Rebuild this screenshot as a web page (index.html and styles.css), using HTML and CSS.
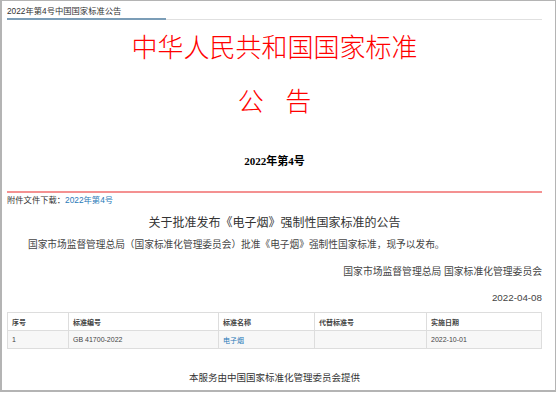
FILE: index.html
```html
<!DOCTYPE html>
<html lang="zh-CN">
  <head>
    <meta charset="UTF-8" />
    <title>2022年第4号中国国家标准公告</title>
    <link rel="stylesheet" href="styles.css">
  </head>
  <body>
    <div class="page">
      <div class="tab-bar">
        <span class="tab-title">2022年第4号中国国家标准公告</span>
      </div>

      <div class="heading">
        <h1 class="main-title">中华人民共和国国家标准</h1>
        <h2 class="notice-title">公&nbsp;&nbsp;&nbsp;告</h2>
        <p class="notice-no">2022年第4号</p>
      </div>

      <div class="attach">
        附件文件下载：<a href="#">2022年第4号</a>
      </div>

      <div class="content">
        <h3 class="content-title">关于批准发布《电子烟》强制性国家标准的公告</h3>
        <p class="content-text">国家市场监督管理总局（国家标准化管理委员会）批准《电子烟》强制性国家标准，现予以发布。</p>
        <p class="sign">国家市场监督管理总局 国家标准化管理委员会</p>
        <p class="sign date">2022-04-08</p>
      </div>

      <table class="std-table">
        <thead>
          <tr>
            <th class="col-no">序号</th>
            <th class="col-code">标准编号</th>
            <th class="col-name">标准名称</th>
            <th class="col-replace">代替标准号</th>
            <th class="col-date">实施日期</th>
          </tr>
        </thead>
        <tbody>
          <tr>
            <td>1</td>
            <td>GB 41700-2022</td>
            <td><a href="#">电子烟</a></td>
            <td></td>
            <td>2022-10-01</td>
          </tr>
        </tbody>
      </table>

      <div class="footer">本服务由中国国家标准化管理委员会提供</div>
    </div>
  </body>
</html>
```

FILE: styles.css
```css
html,
body {
  margin: 0;
  padding: 0;
  background: #fff;
  font-family: "Liberation Sans", Arial, "Noto Sans CJK SC", sans-serif;
  color: #333;
}

.page {
  width: 556px;
  height: 392px;
  box-sizing: border-box;
  border: 1px solid #b4b4b4;
  border-left-width: 2px;
  border-bottom-width: 2px;
  padding: 0 13px 0 5px;
}

.tab-bar {
  height: 18px;
  border-bottom: 1px solid #e0e0e0;
  display: flex;
  align-items: flex-end;
}

.tab-title {
  display: inline-block;
  width: 159px;
  font-size: 8.3px;
  line-height: 14px;
  color: #333;
  border-bottom: 2px solid #7b9db7;
  margin-bottom: -1px;
}

.heading {
  text-align: center;
  border-bottom: 2px solid #f49191;
  height: 161px;
  padding-top: 10px;
}

.main-title {
  margin: 0;
  font-size: 26px;
  line-height: 36px;
  font-weight: 300;
  color: #ff0000;
}

.notice-title {
  margin: 18px 0 0;
  font-size: 26px;
  line-height: 36px;
  font-weight: 300;
  color: #ff0000;
}

.notice-no {
  margin: 32px 0 0;
  font-size: 11px;
  font-weight: bold;
  color: #000;
  font-family: "Liberation Serif", "Noto Sans CJK SC", serif;
}

.attach {
  font-size: 8.3px;
  line-height: 12px;
  margin-top: 1px;
  color: #333;
}

.attach a {
  color: #2a7ab8;
  text-decoration: none;
}

.content-title {
  margin: 8px 0 0;
  text-align: center;
  font-size: 12px;
  line-height: 18px;
  font-weight: normal;
  color: #333;
}

.content-text {
  margin: 5px 0 0;
  text-indent: 21px;
  font-size: 9.7px;
  line-height: 16px;
  color: #444;
}

.sign {
  margin: 12px 0 0;
  text-align: right;
  font-size: 9.8px;
  line-height: 14px;
  color: #444;
}

.date {
  margin-top: 12px;
}

.std-table {
  width: 100%;
  margin-top: 7px;
  border-collapse: collapse;
  font-size: 7px;
  color: #444;
}

.std-table th,
.std-table td {
  border: 1px solid #dddddd;
  height: 17px;
  padding: 0 4px;
  text-align: left;
}

.std-table th {
  font-weight: bold;
}

.std-table tbody tr {
  background: #f7f7f7;
}

.std-table a {
  color: #2a7ab8;
  text-decoration: none;
}

.col-no { width: 52px; }
.col-code { width: 141px; }
.col-name { width: 87px; }
.col-replace { width: 103px; }

.footer {
  margin-top: 21px;
  text-align: center;
  font-size: 9.5px;
  color: #333;
}
```
